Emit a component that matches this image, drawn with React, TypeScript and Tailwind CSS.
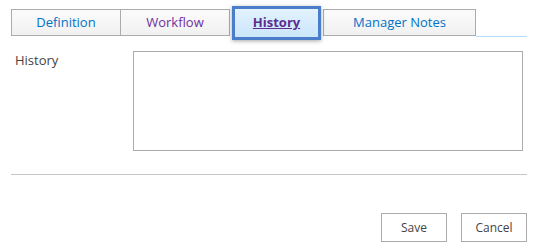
import React from "react";

export default function App() {
  return (
    <div className="w-[534px] h-[246px] bg-white font-['Open_Sans',sans-serif] text-[13px] overflow-hidden">
      <div className="flex items-start pl-[11px] pr-[7px] pt-[9px] h-[37px]">
        <div className="w-[110px] h-[27px] flex items-center justify-center border border-[#ababab] bg-gradient-to-b from-[#fbfbfb] to-[#f1f1f1] text-[#0072c6]">
          Definition
        </div>
        <div className="w-[109px] h-[27px] flex items-center justify-center border border-l-0 border-[#ababab] bg-gradient-to-b from-[#fbfbfb] to-[#f1f1f1] text-[#7030a0]">
          Workflow
        </div>
        <div className="relative ml-[2px] -mt-[3px] w-[89px] h-[34px] flex items-center justify-center border-[3px] border-[#4a7ecb] bg-gradient-to-b from-[#e3f2fd] to-[#cbe6fb] text-[#5c2d91] font-bold underline shadow-[0_1px_4px_rgba(0,0,0,0.35)]">
          History
        </div>
        <div className="ml-[2px] w-[153px] h-[27px] flex items-center justify-center border border-[#ababab] bg-gradient-to-b from-[#fbfbfb] to-[#f1f1f1] text-[#0072c6]">
          Manager Notes
        </div>
        <div className="flex-1 h-[28px] border-b border-[#b7dbf8]" />
      </div>
      <div className="flex pt-[14px] pl-[15px]">
        <div className="w-[118px] text-[#444444] leading-[18px]">History</div>
        <div className="w-[390px] h-[100px] border border-[#ababab] bg-white" />
      </div>
      <div className="mx-[11px] mr-[7px] mt-[23px] border-t border-[#c6c6c6]" />
      <div className="flex justify-end gap-[14px] pr-[7px] mt-[38px]">
        <button className="w-[66px] h-[29px] border border-[#ababab] bg-white text-[12px] text-[#444444]">
          Save
        </button>
        <button className="w-[66px] h-[29px] border border-[#ababab] bg-white text-[12px] text-[#444444]">
          Cancel
        </button>
      </div>
    </div>
  );
}
